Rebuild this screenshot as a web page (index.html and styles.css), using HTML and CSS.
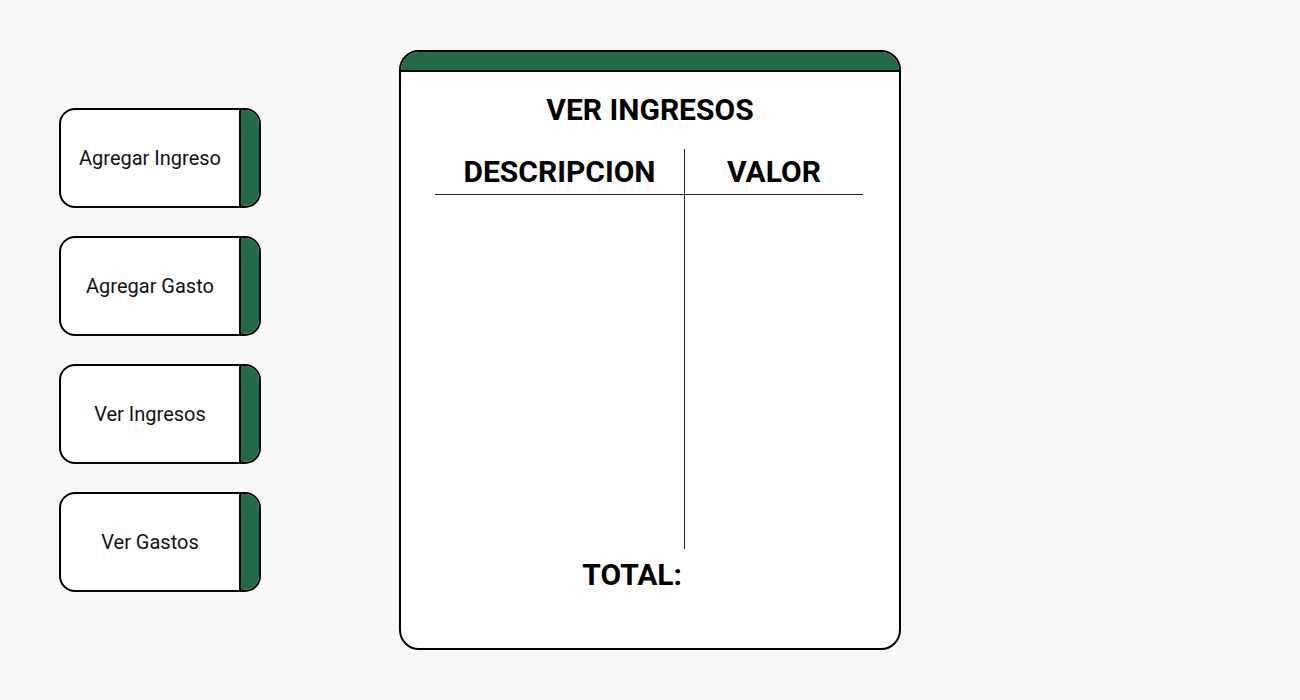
FILE: index.html
```html
<!DOCTYPE html>
<html lang="es">
<head>
<meta charset="utf-8">
<title>Ver Ingresos</title>
<link rel="stylesheet" href="styles.css">
</head>
<body>
<div class="page">
  <nav class="menu">
    <button class="menu-btn"><span class="menu-label">Agregar Ingreso</span><span class="menu-tab"></span></button>
    <button class="menu-btn"><span class="menu-label">Agregar Gasto</span><span class="menu-tab"></span></button>
    <button class="menu-btn"><span class="menu-label">Ver Ingresos</span><span class="menu-tab"></span></button>
    <button class="menu-btn"><span class="menu-label">Ver Gastos</span><span class="menu-tab"></span></button>
  </nav>
  <section class="card">
    <div class="card-head"></div>
    <div class="card-body">
      <h1 class="card-title">VER INGRESOS</h1>
      <div class="table">
        <div class="th th-desc">DESCRIPCION</div>
        <div class="th th-valor">VALOR</div>
        <div class="td td-desc"></div>
        <div class="td td-valor"></div>
      </div>
      <div class="total-row">
        <div class="total-label">TOTAL:</div>
        <div class="total-value"></div>
      </div>
    </div>
  </section>
</div>
</body>
</html>
```
FILE: styles.css
```css
* { box-sizing: border-box; }
html, body { margin: 0; padding: 0; }
body {
  background: #f8f8f8;
  font-family: Roboto, "Liberation Sans", sans-serif;
  color: #000;
  width: 1300px;
  height: 700px;
  overflow: hidden;
}
.page {
  display: flex;
  align-items: flex-start;
  padding: 50px 0 0 59px;
}
.menu {
  display: flex;
  flex-direction: column;
  gap: 28px;
  margin-top: 58px;
}
.menu-btn {
  display: flex;
  width: 202px;
  height: 100px;
  padding: 0;
  border: 2px solid #000;
  border-radius: 16px;
  background: #fff;
  overflow: hidden;
  font-family: Roboto, "Liberation Sans", sans-serif;
  font-size: 20px;
  color: #111;
  cursor: pointer;
}
.menu-label {
  flex: 1;
  display: flex;
  align-items: center;
  justify-content: center;
}
.menu-tab {
  width: 20px;
  background: #226a48;
  border-left: 2px solid #000;
}
.card {
  margin-left: 138px;
  width: 502px;
  height: 600px;
  border: 2px solid #000;
  border-radius: 20px;
  background: #fff;
  overflow: hidden;
}
.card-head {
  height: 20px;
  background: #226a48;
  border-bottom: 2px solid #000;
}
.card-body {
  padding: 21px 34px 0 34px;
}
.card-title {
  margin: 0;
  font-size: 30px;
  font-weight: 700;
  line-height: 34px;
  text-align: center;
}
.table {
  margin-top: 22px;
  display: grid;
  grid-template-columns: 249px 179px;
  grid-template-rows: 46px 354px;
}
.th {
  font-size: 30px;
  font-weight: 700;
  line-height: 46px;
  text-align: center;
  border-bottom: 1px solid #222;
}
.th-valor, .td-valor { border-left: 1px solid #222; }
.total-row {
  display: grid;
  grid-template-columns: 249px 179px;
  margin-top: 9px;
}
.total-label {
  font-size: 30px;
  font-weight: 700;
  line-height: 34px;
  text-align: right;
  padding-right: 2px;
}
```
